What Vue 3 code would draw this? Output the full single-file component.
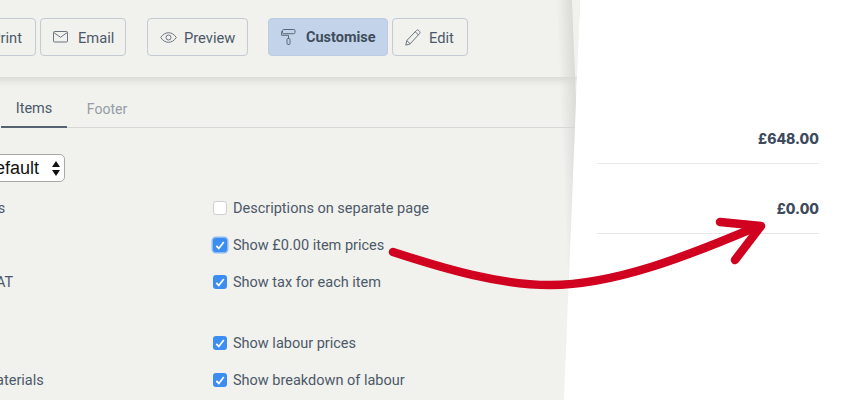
<script setup>
const rows = [
  { left: 'Subtotals', right: 'Descriptions on separate page', state: 'off' },
  { left: '', right: 'Show £0.00 item prices', state: 'focus' },
  { left: 'Net of VAT', right: 'Show tax for each item', state: 'on' },
  { left: '', right: 'Show labour prices', state: 'on', wide: true },
  { left: 'Show materials', right: 'Show breakdown of labour', state: 'on' },
]
</script>

<template>
  <div class="page">
    <section class="panel">
      <div class="toolbar">
        <button class="btn print"><span>Print</span></button>
        <button class="btn email">
          <svg width="16" height="12" viewBox="0 0 16 12" fill="none" stroke="#6b7580" stroke-width="1"><rect x=".5" y=".5" width="14" height="10.500" rx="1"/><path d="M.8 1.500 7.500 6.300l6.700-4.800"/></svg>
          <span>Email</span>
        </button>
        <button class="btn preview">
          <svg width="17" height="11" viewBox="0 0 17 11" fill="none" stroke="#6b7580" stroke-width="1"><path d="M.7 5.500C3 2.200 5.600.7 8.500.7s5.500 1.500 7.800 4.800c-2.300 3.300-4.900 4.800-7.800 4.800S3 8.800.7 5.500Z"/><circle cx="8.500" cy="5.500" r="2.500"/></svg>
          <span>Preview</span>
        </button>
        <button class="btn customise">
          <svg width="15" height="16" viewBox="0 0 15 16" fill="none" stroke="#5d6875" stroke-width="1"><rect x="1.500" y=".5" width="12.500" height="4.200" rx="1.200"/><path d="M1.500 2.500H.6v3.800H7.500v3"/><rect x="6" y="9.500" width="3" height="6" rx="1"/></svg>
          <span>Customise</span>
        </button>
        <button class="btn edit">
          <svg width="16" height="17" viewBox="0 0 16 17" fill="none" stroke="#6b7580" stroke-width="1"><path d="M.8 16.200 1.800 11.500 11.500 1.400c.6-.6 1.500-.6 2.100 0l1 1c.6.600.6 1.500 0 2.100L5.200 14.800.8 16.200ZM1.800 11.500l3.400 3.300M10.300 2.800l3.200 3.200"/></svg>
          <span>Edit</span>
        </button>
      </div>

      <nav class="tabs">
        <span class="tab active">Items</span>
        <span class="tab">Footer</span>
      </nav>

      <div class="select">
        <span>Default</span>
        <svg width="8" height="15" viewBox="0 0 8 15" fill="#111"><path d="M4 0 8 6H0ZM4 15 0 9h8Z"/></svg>
      </div>

      <div class="options">
        <div v-for="row in rows" :key="row.right" class="row" :class="{ wide: row.wide }">
          <span class="left-label">{{ row.left }}</span>
          <label class="check-label">
            <span class="box" :class="row.state">
              <svg v-if="row.state !== 'off'" width="10" height="9" viewBox="0 0 10 9" fill="none" stroke="#fff" stroke-width="1.700"><path d="M1.300 4.800 3.800 7.400 8.800 1"/></svg>
            </span>
            {{ row.right }}
          </label>
        </div>
      </div>
      <div class="edge"></div>
    </section>

    <section class="totals">
      <div class="total first">£648.00</div>
      <div class="total">£0.00</div>
    </section>

    <svg class="arrow" width="868" height="400" viewBox="0 0 868 400" fill="none" stroke="#d0021f" stroke-linecap="round" stroke-linejoin="round">
      <path d="M393 252C445 269 500 285 550 285C615 285 690 255 756 227" stroke-width="8.500"/>
      <path d="M720 222 761 226 735 260" stroke-width="8.500"/>
    </svg>
  </div>
</template>

<style scoped>
.page {
  position: relative;
  width: 868px;
  height: 400px;
  overflow: hidden;
  background: #fff;
  display: flex;
  font-family: Roboto, "Liberation Sans", sans-serif;
}
.panel {
  position: relative;
  width: 580px;
  height: 400px;
  flex: none;
  background: #f1f1ee;
  clip-path: polygon(0 0, 580px 0, 564px 400px, 0 400px);
}
.edge {
  position: absolute;
  top: 0;
  right: 0;
  width: 16px;
  height: 400px;
  transform: skewX(2.300deg);
  background: linear-gradient(90deg, rgba(214, 215, 211, 0), rgba(214, 215, 211, .85));
}
.toolbar {
  height: 78px;
  box-sizing: border-box;
  padding: 18px 0 0;
  margin-left: -40px;
  display: flex;
  gap: 4px;
  width: 620px;
  background: #f1f1ee;
  border-bottom: 1px solid #dcdcd9;
  box-shadow: 0 2px 7px rgba(120, 120, 115, .22);
}
.btn {
  height: 38px;
  box-sizing: border-box;
  border: 1px solid #c4cad2;
  border-radius: 4px;
  background: transparent;
  color: #4c5968;
  font: 14.700px Roboto, "Liberation Sans", sans-serif;
  display: flex;
  align-items: center;
  padding: 0 0 0 12px;
}
.btn span { padding-top: 1px; }
.print { width: 76px; justify-content: flex-end; padding: 0 13px 0 0; }
.email { width: 86px; margin-right: 17px; gap: 9px; }
.preview { width: 101px; margin-right: 16px; gap: 7px; }
.customise {
  width: 120px;
  background: #c3d4ea;
  border-color: #bccde3;
  font-weight: 700;
  font-size: 14.500px;
  color: #3f4c5c;
  gap: 10px;
}
.edit { width: 76px; gap: 8px; }
.tabs {
  height: 50px;
  box-sizing: border-box;
  margin-left: 1px;
  display: flex;
  border-bottom: 1px solid #d6d7d6;
}
.tab {
  width: 66px;
  text-align: center;
  line-height: 62px;
  height: 50px;
  box-sizing: border-box;
  font-size: 14.500px;
  color: #959ca5;
}
.tab + .tab { width: 80px; font-size: 14px; }
.tab.active {
  color: #4c5968;
  border-bottom: 2px solid #56626f;
  height: 50px;
}
.select {
  width: 95px;
  height: 28px;
  margin: 26px 0 0 -30px;
  box-sizing: border-box;
  border: 1px solid #a8a8a6;
  border-radius: 5px;
  background: #fff;
  display: flex;
  align-items: center;
  justify-content: space-between;
  padding: 1px 4px 0 11px;
  font: 18px "Liberation Sans", sans-serif;
  color: #111;
}
.options {
  margin: 16px 0 0 -56px;
  display: flex;
  flex-direction: column;
  gap: 17px;
}
.row {
  display: flex;
  height: 20px;
  align-items: center;
  font-size: 14.500px;
  color: #4c5968;
}
.row.wide { margin-top: 24px; }
.left-label { width: 269px; flex: none; }
.check-label { display: flex; align-items: center; gap: 6px; }
.box {
  width: 14px;
  height: 14px;
  box-sizing: border-box;
  border-radius: 3px;
  display: flex;
  align-items: center;
  justify-content: center;
  background: #3b8df1;
}
.box.off { background: #fff; border: 1px solid #cfcfcd; }
.box.focus { box-shadow: 0 0 0 1.500px #8dbbf3; }
.totals {
  flex: 1;
  padding: 0 49px 0 17px;
  color: #3d4a5c;
  font: 800 14px Inter, "Open Sans", sans-serif;
}
.total {
  height: 70px;
  box-sizing: border-box;
  border-bottom: 1px solid #e8e8e8;
  text-align: right;
  padding-top: 36px;
  line-height: 18px;
}
.total.first { margin-top: 94px; }
.arrow {
  position: absolute;
  inset: 0;
  pointer-events: none;
}
</style>
